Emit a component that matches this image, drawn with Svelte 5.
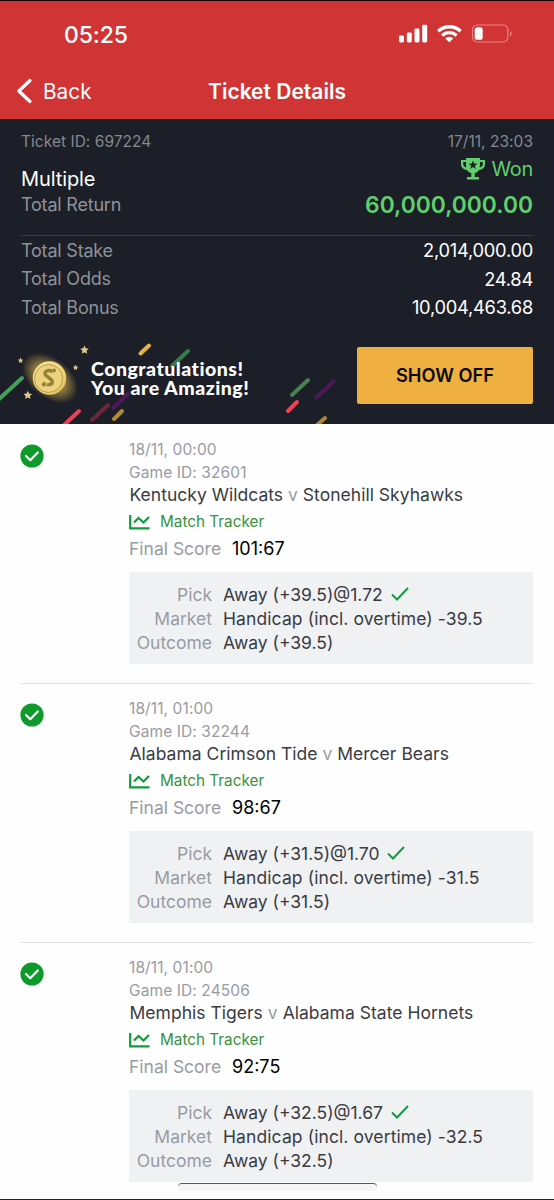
<script>
  const totals = [
    { label: "Total Stake", value: "2,014,000.00" },
    { label: "Total Odds", value: "24.84" },
    { label: "Total Bonus", value: "10,004,463.68" },
  ];

  const games = [
    {
      date: "18/11, 00:00",
      id: "32601",
      home: "Kentucky Wildcats",
      away: "Stonehill Skyhawks",
      score: "101:67",
      handicap: "39.5",
      odds: "1.72",
    },
    {
      date: "18/11, 01:00",
      id: "32244",
      home: "Alabama Crimson Tide",
      away: "Mercer Bears",
      score: "98:67",
      handicap: "31.5",
      odds: "1.70",
    },
    {
      date: "18/11, 01:00",
      id: "24506",
      home: "Memphis Tigers",
      away: "Alabama State Hornets",
      score: "92:75",
      handicap: "32.5",
      odds: "1.67",
    },
  ];
</script>

<div class="screen">
  <header>
    <div class="status">
      <span class="time">05:25</span>
      <svg class="signals" width="114" height="20" viewBox="0 0 114 20">
        <g fill="#fff">
          <rect x="0" y="11.5" width="5" height="7" rx="1.4" />
          <rect x="7.8" y="8.5" width="5" height="10" rx="1.4" />
          <rect x="15.5" y="4.5" width="5" height="14" rx="1.4" />
          <rect x="23.2" y="0.7" width="5" height="17.8" rx="1.4" />
          <path d="M50.3 18.3 46.3 14.5a5.6 5.6 0 0 1 8 0z" />
        </g>
        <g fill="none" stroke="#fff" stroke-width="3.3">
          <path d="M39.2 7.3a16 16 0 0 1 22.400 0" />
          <path d="M43.2 11.6a10.200 10.200 0 0 1 14.300 0" />
        </g>
        <rect x="73.5" y="1" width="35.4" height="17" rx="4.8" fill="none" stroke="#e88383" stroke-width="1.2" />
        <rect x="75.7" y="3.3" width="8" height="12.5" rx="2.6" fill="#fff" />
        <path d="M111 7.2c2.2.8 2.2 4 0 4.8z" fill="#e88383" />
      </svg>
    </div>
    <nav>
      <button class="back">
        <svg width="17" height="26" viewBox="0 0 17 26">
          <path d="M14 2.5 2.8 13 14 23.5" fill="none" stroke="#fff" stroke-width="3.2" stroke-linecap="round" stroke-linejoin="round" />
        </svg>
        <span>Back</span>
      </button>
      <h1>Ticket Details</h1>
    </nav>
  </header>

  <section class="summary">
    <div class="row meta">
      <span>Ticket ID: 697224</span>
      <span>17/11, 23:03</span>
    </div>
    <div class="row result">
      <div class="kind">
        <span class="multiple">Multiple</span>
        <span class="label">Total Return</span>
      </div>
      <div class="win">
        <span class="won">
          <svg width="24" height="22" viewBox="0 0 24 22">
            <path d="M5 0h14v2h5v4c0 3.600-2.500 5.600-6 6-1.200 1.900-2.800 2.900-4.300 3.200V19H18v2.400H6V19h4.300v-3.800C8.800 14.900 7.200 13.900 6 12 2.500 11.600 0 9.600 0 6V2h5zM5 4H2.200v2c0 1.800 1.200 3 3.200 3.600C5.100 8.300 5 6.500 5 4zM19 4c0 2.500-.1 4.300-.4 5.600 2-.6 3.200-1.800 3.200-3.600V4z" fill="#60d06d" fill-rule="evenodd" />
            <path d="m12 2.500 1.200 3 3.200.2-2.500 2 .9 3.200L12 9.100l-2.800 1.800.9-3.200-2.500-2 3.200-.2z" fill="#1c1f27" />
          </svg>
          Won
        </span>
        <span class="amount">60,000,000.00</span>
      </div>
    </div>
    <div class="totals">
      {#each totals as total}
        <div class="row">
          <span class="label">{total.label}</span>
          <span class="value">{total.value}</span>
        </div>
      {/each}
    </div>
    <div class="banner">
      <svg class="confetti" width="554" height="99" viewBox="0 0 554 99">
        <defs>
          <radialGradient id="glow">
            <stop offset="0.4" stop-color="#d6b04e" stop-opacity="0.8" />
            <stop offset="1" stop-color="#d6b04e" stop-opacity="0" />
          </radialGradient>
          <linearGradient id="gold" x1="0" y1="0" x2="1" y2="1">
            <stop offset="0" stop-color="#f8eaa0" />
            <stop offset="1" stop-color="#e6bf58" />
          </linearGradient>
        </defs>
        <g stroke-width="4" stroke-linecap="round">
          <path d="M-2 75 22 53" stroke="#45a15a" />
          <path d="M62 102 79 86" stroke="#ef4058" />
          <path d="m92 95 16-15" stroke="#6b2937" />
          <path d="m113 83 15-14" stroke="#51175d" />
          <path d="m114 94 8-8" stroke="#b18b2f" />
          <path d="m140.500 28.500 8.500-8" stroke="#eab43c" />
          <path d="m172 41 16-15" stroke="#397b4a" />
          <path d="m292 70 16-15" stroke="#488351" />
          <path d="m316.500 72.500 17-16" stroke="#4c1858" />
          <path d="m288 86 9-9" stroke="#ef4058" />
          <path d="m316 101 9-8" stroke="#a98630" />
        </g>
        <ellipse cx="50" cy="53" rx="32" ry="20" fill="url(#glow)" transform="rotate(38 50 53)" />
        <circle cx="49.500" cy="53" r="16.700" fill="url(#gold)" />
        <circle cx="48.500" cy="53.500" r="14" fill="#ecd47e" stroke="#b4923c" stroke-width="0.900" />
        <path d="M52.500 47c-2.500-2.500-7.500-1.500-7.500 1.500 0 3.500 7.500 4.500 7.300 8.300-.2 3-3.300 3.200-5.300 2.700" fill="none" stroke="#96813b" stroke-width="3.400" />
        <g fill="#96813b">
          <circle cx="44" cy="59.300" r="2.200" />
          <circle cx="54" cy="45.500" r="1.900" />
        </g>
        <g fill="#dfc98a">
          <path id="star" d="m84.500 20.500 1.300 2.800 3 .4-2.200 2.100.6 3-2.700-1.500-2.700 1.500.6-3-2.200-2.100 3-.4z" />
          <use href="#star" transform="translate(-56.700 45.300)" />
          <use href="#star" transform="translate(-33.500 19.500) scale(.64)" />
          <use href="#star" transform="translate(21.500 26.500) scale(.64)" />
        </g>
      </svg>
      <p>Congratulations!<br />You are Amazing!</p>
      <button class="show">SHOW OFF</button>
    </div>
  </section>

  <main>
    {#each games as game}
      <article>
        <svg class="badge" width="24" height="24" viewBox="0 0 24 24">
          <circle cx="12" cy="12" r="11.600" fill="#0d9a2b" />
          <path d="m6 12 4.300 4.200 7.500-7.700" fill="none" stroke="#fff" stroke-width="2.200" stroke-linecap="round" stroke-linejoin="round" />
        </svg>
        <div class="game">
          <span class="info">{game.date}</span>
          <span class="info">Game ID: {game.id}</span>
          <span class="teams">{game.home} <i>v</i> {game.away}</span>
          <span class="tracker">
            <svg width="21" height="16" viewBox="0 0 21 16">
              <path d="M1.200 1v13.300h19.300" fill="none" stroke="#129a3b" stroke-width="2.200" />
              <path d="m5 8.500 4.500-4.500 5 4.500 5.500-5.500" fill="none" stroke="#129a3b" stroke-width="2.200" />
            </svg>
            Match Tracker
          </span>
          <span class="score">Final Score <b>{game.score}</b></span>
          <dl>
            <dt>Pick</dt>
            <dd>
              Away (+{game.handicap})@{game.odds}
              <svg width="18" height="14" viewBox="0 0 18 14">
                <path d="m1 7.500 5 5L17 1" fill="none" stroke="#149a3c" stroke-width="2" />
              </svg>
            </dd>
            <dt>Market</dt>
            <dd class="market">Handicap (incl. overtime) -{game.handicap}</dd>
            <dt>Outcome</dt>
            <dd>Away (+{game.handicap})</dd>
          </dl>
        </div>
      </article>
    {/each}
  </main>

  <div class="home"></div>
</div>

<style>
  :global(body) {
    margin: 0;
    background: #fefefe;
  }

  .screen {
    position: relative;
    box-sizing: border-box;
    width: 554px;
    height: 1200px;
    overflow: hidden;
    border-top: 1px solid #160507;
    border-bottom: 1px solid #222;
    background: #fefefe;
    font-family: Inter, "Liberation Sans", sans-serif;
    font-size: 18px;
  }

  button {
    padding: 0;
    border: 0;
    background: none;
    font-family: inherit;
  }

  header {
    height: 118px;
    background: #d13434;
    color: #fff;
  }

  .status {
    display: flex;
    justify-content: space-between;
    align-items: center;
    height: 66px;
    padding: 0 41px 0 64px;
  }

  .time {
    margin-top: 2px;
    font-size: 23px;
    font-weight: 500;
    letter-spacing: -0.1px;
  }

  nav {
    display: grid;
    grid-template-columns: 1fr auto 1fr;
    align-items: center;
    height: 48px;
    padding: 0 16px;
  }

  .back {
    display: flex;
    align-items: center;
    gap: 10px;
    color: #fff;
    font-size: 20.800px;
  }

  h1 {
    margin: 0;
    font-size: 21px;
    font-weight: 600;
  }

  .summary {
    box-sizing: border-box;
    height: 305px;
    padding: 13px 21px 0;
    background: #1c1f27;
    color: #fff;
  }

  .row {
    display: flex;
    justify-content: space-between;
  }

  .meta {
    height: 20px;
    color: #85888f;
    font-size: 15.500px;
    letter-spacing: 0.03px;
    line-height: 20px;
  }

  .result {
    height: 83px;
    border-bottom: 1px solid #3b3e45;
  }

  .kind,
  .win {
    display: flex;
    flex-direction: column;
  }

  .kind {
    padding-top: 14px;
  }

  .win {
    align-items: flex-end;
    padding-top: 4px;
    color: #60d06d;
  }

  .multiple {
    font-size: 20px;
    letter-spacing: -0.1px;
    line-height: 27px;
  }

  .kind .label {
    line-height: 24px;
  }

  .label {
    color: #8f9299;
    letter-spacing: -0.2px;
    line-height: 25px;
  }

  .value {
    font-size: 18.300px;
    letter-spacing: -0.250px;
  }

  .won {
    display: flex;
    align-items: center;
    gap: 6px;
    font-size: 20px;
    letter-spacing: -0.3px;
    line-height: 26px;
  }

  .amount {
    margin-top: 9px;
    font-size: 22.800px;
    font-weight: 600;
    line-height: 28px;
  }

  .totals {
    height: 89px;
  }

  .totals .row {
    height: 28.500px;
    align-items: center;
  }

  .banner {
    position: relative;
    display: flex;
    justify-content: space-between;
    align-items: center;
    height: 99px;
    margin: 0 -21px;
    padding: 0 21px 0 91px;
    box-sizing: border-box;
  }

  .confetti {
    position: absolute;
    top: 0;
    left: 0;
  }

  .banner p {
    position: relative;
    margin: 7px 0 0;
    font-family: Lato, sans-serif;
    font-size: 19.500px;
    font-weight: 900;
    letter-spacing: 0.5px;
    line-height: 19px;
  }

  .show {
    width: 176px;
    height: 57px;
    margin-top: 1px;
    border-radius: 2px;
    background: #efaf41;
    color: #0c0a05;
    font-size: 18.300px;
    font-weight: 600;
  }

  main {
    padding: 0 21px;
  }

  article {
    display: flex;
    box-sizing: border-box;
    height: 258.700px;
    padding-top: 14px;
    border-bottom: 1px solid #dfe0e2;
  }

  article:first-child {
    height: 260px;
    padding-top: 15px;
  }

  .badge {
    flex: none;
    margin: 5px 85px 0 -1px;
  }

  .game {
    display: flex;
    flex: 1;
    flex-direction: column;
    margin-top: -1px;
    color: #393b42;
  }

  .info {
    color: #999ba3;
    font-size: 15.500px;
    letter-spacing: 0.1px;
    line-height: 23px;
  }

  .teams {
    padding-left: 0.500px;
    font-size: 17.500px;
    letter-spacing: 0.02px;
    line-height: 22px;
    white-space: nowrap;
  }

  i {
    color: #999ba3;
    font-style: normal;
  }

  .tracker {
    display: flex;
    align-items: center;
    gap: 10px;
    margin-top: 3px;
    color: #38933d;
    font-size: 15.300px;
    line-height: 26px;
  }

  .score {
    color: #999ba3;
    font-size: 17.500px;
    line-height: 28px;
  }

  b {
    margin-left: 6px;
    color: #000;
    font-size: 18px;
    font-weight: 400;
  }

  dl {
    display: grid;
    grid-template-columns: 83px 1fr;
    grid-auto-rows: 24px;
    column-gap: 11px;
    height: 92px;
    margin: 9px 0 0;
    padding-top: 10px;
    box-sizing: border-box;
    background: #f0f1f3;
    font-size: 17.500px;
    line-height: 25px;
    white-space: nowrap;
  }

  dt {
    color: #999ba3;
    text-align: right;
  }

  dd {
    margin: 0;
  }

  .market {
    letter-spacing: 0.1px;
  }

  dd svg {
    margin-left: 3px;
  }

  .home {
    position: absolute;
    bottom: 8px;
    left: 178px;
    box-sizing: border-box;
    width: 199px;
    height: 8px;
    border-top: 1.500px solid #55555a;
    border-radius: 4px;
    background: #f5f5f5;
  }
</style>
